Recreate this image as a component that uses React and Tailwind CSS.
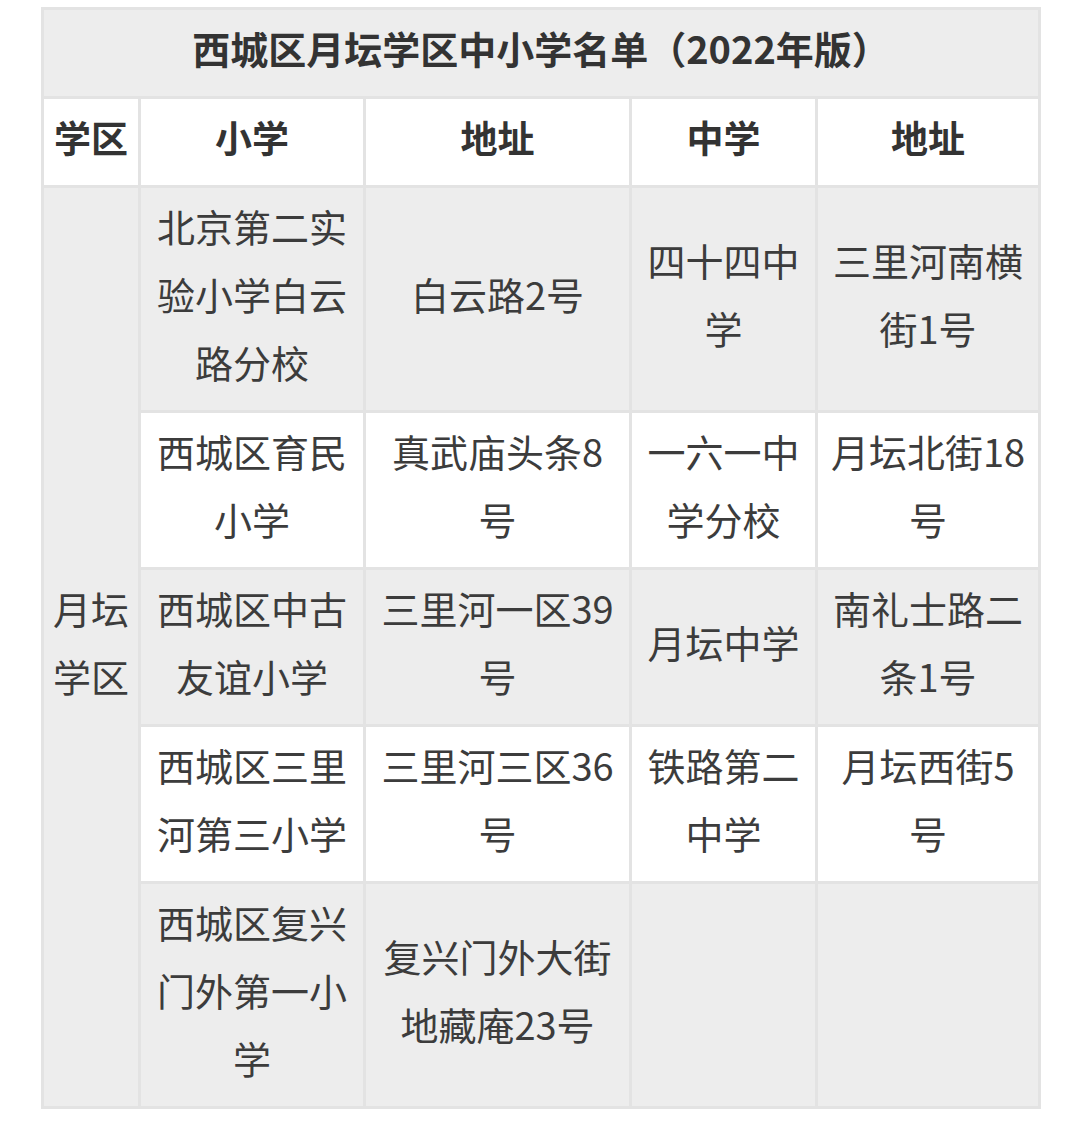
import React from "react";

const F = { fontFamily: '"Noto Sans CJK SC", "Noto Sans", sans-serif' };

const rows = [
  { bg: "bg-[#ededed]", cells: ["北京第二实验小学白云路分校", "白云路2号", "四十四中学", "三里河南横街1号"] },
  { bg: "bg-white", cells: ["西城区育民小学", "真武庙头条8号", "一六一中学分校", "月坛北街18号"] },
  { bg: "bg-[#ededed]", cells: ["西城区中古友谊小学", "三里河一区39号", "月坛中学", "南礼士路二条1号"] },
  { bg: "bg-white", cells: ["西城区三里河第三小学", "三里河三区36号", "铁路第二中学", "月坛西街5号"] },
  { bg: "bg-[#ededed]", cells: ["西城区复兴门外第一小学", "复兴门外大街地藏庵23号", "", ""] },
];

export default function App() {
  const base = "border-[3px] border-[#e3e3e3] pt-[4px] pb-[14px] text-center align-middle leading-[68px]";
  const cell = base + " px-[10px] text-[38px] text-[#3c3c3c]";
  const head = base + " px-[8px] text-[37px] font-bold text-[#333333]";
  return (
    <div className="w-[1080px] h-[1130px] bg-white pt-[7px] pl-[41px]" style={F}>
      <table className="table-fixed border-collapse w-[997px]">
        <colgroup>
          <col className="w-[97px]" />
          <col className="w-[225px]" />
          <col className="w-[266px]" />
          <col className="w-[186px]" />
          <col className="w-[223px]" />
        </colgroup>
        <tbody>
          <tr className="bg-[#ededed]">
            <td colSpan={5} className={base + " px-[8px] text-[38px] font-bold text-[#333333]"}>
              西城区月坛学区中小学名单（2022年版）
            </td>
          </tr>
          <tr className="bg-white">
            <td className={base + " px-0 text-[37px] font-bold text-[#333333]"}>学区</td>
            <td className={head}>小学</td>
            <td className={head}>地址</td>
            <td className={head}>中学</td>
            <td className={head}>地址</td>
          </tr>
          {rows.map((r, i) => (
            <tr key={i} className={r.bg}>
              {i === 0 && (
                <td rowSpan={5} className={base + " px-0 text-[38px] text-[#3c3c3c] bg-[#ededed]"}>
                  月坛学区
                </td>
              )}
              {r.cells.map((c, j) => (
                <td key={j} className={cell}>{c}</td>
              ))}
            </tr>
          ))}
        </tbody>
      </table>
    </div>
  );
}
